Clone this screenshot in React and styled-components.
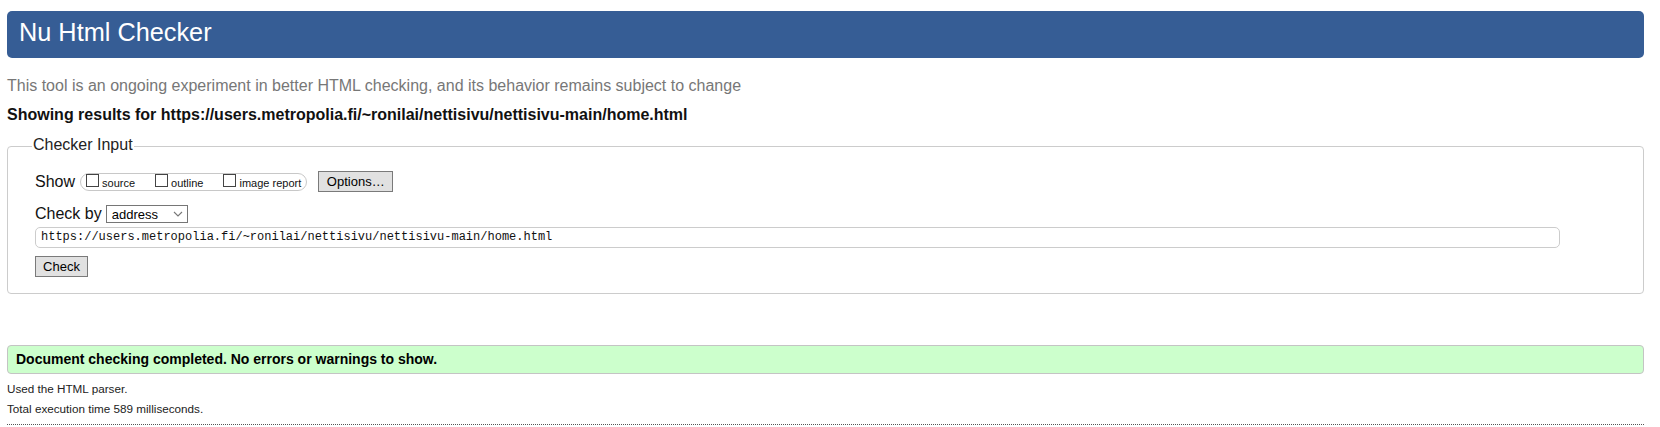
import React from 'react';
import styled, { createGlobalStyle } from 'styled-components';

const GlobalStyle = createGlobalStyle`
  body {
    margin: 0;
    background: #fff;
    color: #000;
    font-family: "Liberation Sans", Arial, sans-serif;
  }
`;

const Page = styled.div`
  padding: 11px 16px 0 7px;
`;

const Banner = styled.h1`
  margin: 0;
  height: 47px;
  box-sizing: border-box;
  padding: 7px 0 0 12px;
  background: #365d95;
  border-radius: 5px;
  color: #fff;
  font-size: 25.3px;
  font-weight: normal;
  line-height: normal;
`;

const About = styled.p`
  margin: 18px 0 0;
  font-size: 16px;
  line-height: 20px;
  color: #777;
`;

const Results = styled.p`
  margin: 9px 0 0;
  font-size: 16px;
  font-weight: bold;
  line-height: 20px;
  color: #111;
`;

const InputSet = styled.fieldset`
  margin: 11px 0 0;
  padding: 14px 0 15.5px 27px;
  border: 1px solid #ccc;
  border-radius: 4px;
  min-inline-size: 0;
`;

const Legend = styled.legend`
  margin-left: -3px;
  padding: 0 1px 3px;
  font-size: 16px;
  line-height: 18px;
  color: #222;
`;

const Body = styled.div`
  display: flex;
  flex-direction: column;
`;

const Row = styled.div`
  display: flex;
  align-items: center;
  height: ${p => p.$h}px;
  margin-top: ${p => p.$gap || 0}px;
`;

const Label = styled.span`
  font-size: 16px;
  line-height: normal;
  color: #111;
`;

const Pill = styled.div`
  display: flex;
  align-items: baseline;
  gap: 20px;
  align-self: flex-start;
  margin: 2px 0 0 5px;
  height: 18px;
  box-sizing: border-box;
  padding: 0 5px;
  border: 1px solid #c8c8c8;
  border-radius: 9px;
`;

const Option = styled.label`
  display: flex;
  align-items: baseline;
`;

const Box = styled.span`
  display: inline-block;
  width: 13px;
  height: 13px;
  box-sizing: border-box;
  margin-right: 3px;
  border: 1px solid #444;
  background: #fff;
`;

const OptionText = styled.span`
  font-size: 11px;
  line-height: 13px;
  color: #111;
`;

const Button = styled.button`
  width: ${p => p.$w}px;
  height: 21px;
  margin-left: ${p => p.$ml || 0}px;
  padding: 0;
  box-sizing: border-box;
  border: 1px solid #7a7a7a;
  border-radius: 0;
  background: #e1e1e1;
  color: #000;
  font-family: "Liberation Sans", Arial, sans-serif;
  font-size: 13px;
`;

const Select = styled.div`
  display: flex;
  align-items: center;
  justify-content: space-between;
  width: 82px;
  height: 18px;
  box-sizing: border-box;
  margin-left: 4px;
  padding: 0 4px 0 5px;
  border: 1px solid #767676;
  background: #fff;
  font-size: 13px;
  color: #000;
`;

const UrlField = styled.input`
  width: 1525px;
  height: 21px;
  box-sizing: border-box;
  margin: 0;
  padding: 0 5px;
  border: 1px solid #ccc;
  border-radius: 5px;
  background: #fff;
  color: #111;
  font-family: "Liberation Mono", "DejaVu Sans Mono", monospace;
  font-size: 12px;
  outline: none;
`;

const Success = styled.div`
  margin-top: 51px;
  padding: 0 8px;
  border: 1px solid #c4c4c4;
  border-radius: 4px;
  background: #ccffcc;
  font-size: 14px;
  font-weight: bold;
  line-height: 27px;
  color: #000;
`;

const Note = styled.p`
  margin: ${p => p.$first ? '5px' : '0'} 0 0;
  font-size: 11.7px;
  line-height: 20px;
  color: #222;
`;

const Rule = styled.div`
  margin-top: 5px;
  border-top: 1px dotted #555;
`;

const Chevron = () => (
  <svg width="10" height="6" viewBox="0 0 10 6">
    <path d="M1 1l4 4 4-4" fill="none" stroke="#777" strokeWidth="1.1" />
  </svg>
);

const url = 'https://users.metropolia.fi/~ronilai/nettisivu/nettisivu-main/home.html';

export default function App() {
  return (
    <Page>
      <GlobalStyle />
      <Banner>Nu Html Checker</Banner>
      <About>This tool is an ongoing experiment in better HTML checking, and its behavior remains subject to change</About>
      <Results>Showing results for {url}</Results>

      <InputSet>
        <Legend>Checker Input</Legend>
        <Body>
          <Row $h={21}>
            <Label>Show</Label>
            <Pill>
              <Option><Box /><OptionText>source</OptionText></Option>
              <Option><Box /><OptionText>outline</OptionText></Option>
              <Option><Box /><OptionText>image report</OptionText></Option>
            </Pill>
            <Button $w={75} $ml={11}>Options…</Button>
          </Row>
          <Row $h={20} $gap={12}>
            <Label>Check by</Label>
            <Select>address<Chevron /></Select>
          </Row>
          <Row $h={22} $gap={2}>
            <UrlField readOnly value={url} />
          </Row>
          <Row $h={21} $gap={8}>
            <Button $w={53}>Check</Button>
          </Row>
        </Body>
      </InputSet>

      <Success>Document checking completed. No errors or warnings to show.</Success>
      <Note $first>Used the HTML parser.</Note>
      <Note>Total execution time 589 milliseconds.</Note>
      <Rule />
    </Page>
  );
}
